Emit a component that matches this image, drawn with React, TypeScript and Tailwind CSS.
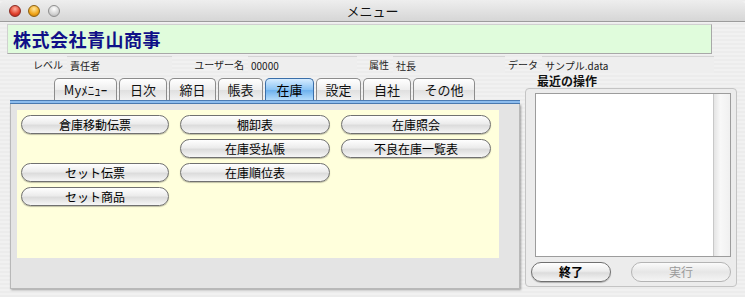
import React from 'react';

const jp = "font-['Lucida_Grande','Noto_Sans_CJK_JP',sans-serif]";

const tabs = [
  { label: 'Myﾒﾆｭｰ', w: 'w-[63px]' },
  { label: '日次', w: 'w-[48px]' },
  { label: '締日', w: 'w-[47px]' },
  { label: '帳表', w: 'w-[45px]' },
  { label: '在庫', w: 'w-[49px]', active: true },
  { label: '設定', w: 'w-[45px]' },
  { label: '自社', w: 'w-[48px]' },
  { label: 'その他', w: 'w-[62px]' },
];

const buttons: (string | null)[] = [
  '倉庫移動伝票', '棚卸表', '在庫照会',
  null, '在庫受払帳', '不良在庫一覧表',
  'セット伝票', '在庫順位表', null,
  'セット商品', null, null,
];

function PillButton({ label, disabled, bold, className }: { label: string; disabled?: boolean; bold?: boolean; className?: string }) {
  return (
    <button
      className={
        'flex items-center justify-center rounded-full border leading-none ' +
        (disabled
          ? 'border-[#b4b4b4] bg-[linear-gradient(#fbfbfb,#e6e6e6_50%,#f4f4f4)] text-[#9a9a9a] '
          : 'border-[#707070] bg-[linear-gradient(#ffffff,#ececec_45%,#dcdcdc_55%,#f6f6f6)] text-black shadow-[0_1px_1px_rgba(0,0,0,0.25)] ') +
        (bold ? 'font-bold ' : '') +
        (className || '')
      }
    >
      {label}
    </button>
  );
}

function Field({ label, value, labelW, fieldW }: { label: string; value: string; labelW: string; fieldW: string }) {
  return (
    <div className="flex items-center h-full">
      <span className={`${labelW} text-right pr-[4px] text-[10px] text-[#222]`}>{label}</span>
      <div className={`${fieldW} h-full flex items-center pl-[3px] text-[10px] text-[#222] bg-[#eeeeee] border-t border-[#d4d4d4]`}>
        {value}
      </div>
    </div>
  );
}

export default function App() {
  return (
    <div className={`${jp} w-[745px] h-[297px] overflow-hidden bg-[repeating-linear-gradient(0deg,#ececec_0px,#ececec_2px,#f1f1f1_2px,#f1f1f1_4px)]`}>
      {/* title bar */}
      <div className="h-[22px] flex items-center rounded-t-[6px] border-b border-[#9c9c9c] bg-[linear-gradient(#eeeeee,#d6d6d6)]">
        <div className="flex items-center gap-[7px] pl-[9px] w-[70px]">
          <span className="w-[12px] h-[12px] rounded-full border border-[#8a2a22] bg-[radial-gradient(circle_at_50%_30%,#ffb0a0,#e0402c_60%,#a8201a)]" />
          <span className="w-[12px] h-[12px] rounded-full border border-[#8c6010] bg-[radial-gradient(circle_at_50%_30%,#ffe8a0,#f0a418_60%,#b87008)]" />
          <span className="w-[12px] h-[12px] rounded-full ml-[1px] border border-[#8e8e8e] bg-[radial-gradient(circle_at_50%_30%,#ffffff,#d2d2d2_60%,#a8a8a8)]" />
        </div>
        <div className="flex-1 text-center text-[13px] text-[#111]">メニュー</div>
        <div className="w-[70px]" />
      </div>

      {/* company banner */}
      <div className="ml-[7px] mt-[2px] w-[705px] h-[30px] flex items-center pl-[5px] bg-[#e0fcdc] border border-[#a8a8a8] border-l-[#d0d0d0] border-t-[#d0d0d0]">
        <span className="text-[18px] font-bold text-[#101088] tracking-[0.5px]">株式会社青山商事</span>
      </div>

      {/* info row */}
      <div className="mt-[2px] h-[17px] flex items-center">
        <Field label="レベル" value="責任者" labelW="w-[67px]" fieldW="w-[105px]" />
        <Field label="ユーザー名" value="00000" labelW="w-[76px]" fieldW="w-[109px]" />
        <Field label="属性" value="社長" labelW="w-[36px]" fieldW="w-[112px]" />
        <Field label="データ" value="サンプル.data" labelW="w-[37px]" fieldW="w-[172px]" />
      </div>

      {/* main area */}
      <div className="flex mt-[1px]">
        {/* left column */}
        <div className="ml-[10px] w-[510px] flex flex-col">
          <div className="mt-[4px] h-[22px] flex items-end gap-[2px] pl-[44px]">
            {tabs.map((t) => (
              <div
                key={t.label}
                className={
                  `${t.w} h-[22px] flex items-center justify-center rounded-t-[5px] border border-b-0 text-[13px] leading-none ` +
                  (t.active
                    ? 'border-[#3a6ea8] bg-[linear-gradient(#d6ecff,#8cc4f4_50%,#6eb2ee_55%,#b4dcfc)] text-black'
                    : 'border-[#8c8c8c] bg-[linear-gradient(#ffffff,#eeeeee_50%,#e0e0e0_55%,#f2f2f2)] text-[#111]')
                }
              >
                {t.label}
              </div>
            ))}
          </div>
          <div className="h-[4px] border-y border-[#4c7cb4] bg-[#8cbcee]" />
          <div className="h-[185px] bg-[#e4e4e4] border-x border-b border-[#b8b8b8] shadow-[1px_1px_2px_rgba(0,0,0,0.35)] pt-[6px] pl-[6px]">
            <div className="w-[482px] h-[148px] bg-[#ffffdc] pt-[5px] pl-[4px]">
              <div className="grid grid-cols-[148px_150px_150px] gap-x-[11px] gap-y-[5px]">
                {buttons.map((b, i) =>
                  b ? (
                    <PillButton key={i} label={b} className="h-[19px] text-[12px]" />
                  ) : (
                    <div key={i} className="h-[19px]" />
                  )
                )}
              </div>
            </div>
          </div>
        </div>

        {/* right column */}
        <div className="ml-[5px] w-[212px] flex flex-col">
          <div className="h-[14px] pl-[12px] text-[12px] font-bold leading-[14px] text-[#111]">最近の操作</div>
          <div className="h-[199px] rounded-[4px] border border-[#c4c4c4] bg-[#ececec] pt-[4px] pl-[9px] flex flex-col">
            <div className="flex h-[164px] w-[196px] border border-[#9c9c9c]">
              <div className="flex-1 bg-white" />
              <div className="w-[17px] border-l border-[#c8c8c8] bg-[linear-gradient(90deg,#e4e4e4,#f8f8f8_40%,#f0f0f0)]" />
            </div>
            <div className="flex mt-[5px] gap-[20px] -ml-[4px]">
              <PillButton label="終了" bold className="w-[80px] h-[20px] text-[12px]" />
              <PillButton label="実行" disabled className="w-[100px] h-[20px] text-[12px]" />
            </div>
          </div>
        </div>
      </div>
    </div>
  );
}
